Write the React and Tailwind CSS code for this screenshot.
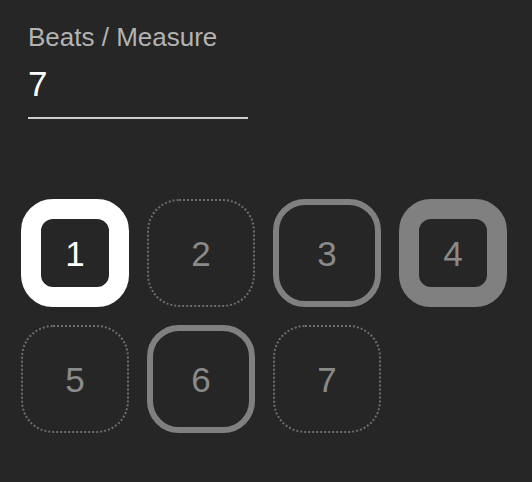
export default function App() {
  const beats = [
    { n: 1, kind: 'strong' },
    { n: 2, kind: 'off' },
    { n: 3, kind: 'mid' },
    { n: 4, kind: 'accent' },
    { n: 5, kind: 'off' },
    { n: 6, kind: 'mid' },
    { n: 7, kind: 'off' },
  ];

  const boxClass = (kind) => {
    if (kind === 'strong') return 'border-[20px] border-white text-white';
    if (kind === 'accent') return 'border-[20px] border-[#808080] text-[#8a8a8a]';
    if (kind === 'mid') return 'border-[6px] border-[#808080] text-[#8a8a8a]';
    return 'border-2 border-dotted border-[#6e6e6e] text-[#8a8a8a]';
  };

  return (
    <div className="w-full h-screen bg-[#262626] font-['Liberation_Sans',Arial,sans-serif] overflow-hidden">
      <div className="pl-[28px] pt-[22px]">
        <div className="text-[26px] leading-[30px] text-[#b3b3b3]">Beats / Measure</div>
        <div className="mt-[12px] w-[220px] border-b-2 border-[#cccccc] pb-[13px]">
          <div className="text-[35px] leading-[40px] text-white">7</div>
        </div>
      </div>
      <div className="ml-[21px] mt-[80px] grid grid-cols-[repeat(4,108px)] gap-[18px]">
        {beats.map((b) => (
          <div
            key={b.n}
            className={`w-[108px] h-[108px] rounded-[32px] flex items-center justify-center text-[35px] leading-none ${boxClass(b.kind)}`}
          >
            {b.n}
          </div>
        ))}
      </div>
    </div>
  );
}
